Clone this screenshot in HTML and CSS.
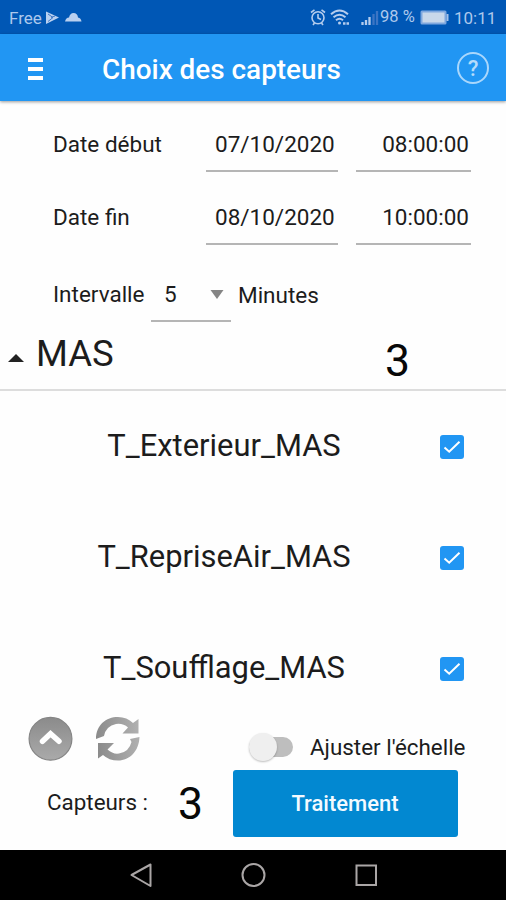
FILE: index.html
```html
<!DOCTYPE html>
<html lang="fr">
<head>
<meta charset="utf-8">
<title>Choix des capteurs</title>
<link rel="stylesheet" href="styles.css">
</head>
<body>
<div class="screen">
  <div class="status">
    <span class="carrier">Free</span>
    <svg class="status-left" width="42" height="34" viewBox="44 0 42 34">
      <path d="M46 11.500L59 17.500L46 24Z" fill="#b9d0f0"/>
      <path d="M48 14l5 3.500-5 4M51 17.500l4-1.500" stroke="#3f78c6" fill="none"/>
      <path d="M65 21.500q1-4 4-4 1-4.500 4.500-4.500 4 0 4.500 4.500 3 .5 3.500 4z" fill="#b9d0f0"/>
    </svg>
    <svg class="status-mid" width="72" height="34" viewBox="308 0 72 34" fill="none" stroke="#b5cdee" stroke-width="1.600">
      <circle cx="318" cy="17.800" r="6"/><path d="M318 14v4l3 1.500M311 12.500l3.500-2.700M325 12.500l-3.500-2.700M313 25l1.500-2M323 25l-1.500-2"/>
      <path d="M331 14.200q8.500-7.500 17 0M333.500 17.300q6-5 12 0M336 20.300q3.500-3 7 0" stroke-width="2"/>
      <circle cx="339.500" cy="23" r="1.500" fill="#b5cdee" stroke="none"/><path d="M343 23.500h6" stroke-dasharray="2.500 1" stroke-width="2.500"/>
      <path d="M362.500 25v-3M366 25v-5M369.500 25v-8" stroke-width="2.300"/><path d="M373.500 25V14M377 25V11" stroke="#3c75c4" stroke-width="2.300"/>
    </svg>
    <span class="percent">98 %</span>
    <svg class="battery" width="30" height="34" viewBox="420 0 30 34">
      <rect x="420.500" y="10.500" width="26" height="14" rx="1.500" fill="#7ea7df"/><rect x="422.500" y="12.500" width="22" height="10" fill="#c8d7ea"/><path d="M447.500 14v7" stroke="#a4c1e9" stroke-width="2"/>
    </svg>
    <span class="clock">10:11</span>
  </div>
  <header class="bar">
    <div class="menu"><i></i><i></i><i></i></div>
    <h1>Choix des capteurs</h1>
    <div class="help">?</div>
  </header>
  <main>
    <div class="row start"><label>Date début</label><span class="field date">07/10/2020</span><span class="field time">08:00:00</span></div>
    <div class="row end"><label>Date fin</label><span class="field date">08/10/2020</span><span class="field time">10:00:00</span></div>
    <div class="row interval"><label>Intervalle</label><span class="field select">5<svg width="14" height="9" viewBox="0 0 14 9"><path d="M.5 0h13L7 9z" fill="#858585"/></svg></span><span class="unit">Minutes</span></div>
    <div class="group"><svg width="16" height="8" viewBox="0 0 16 8"><path d="M0 8L8 0l8 8z" fill="#222"/></svg><span class="group-name">MAS</span><span class="group-count">3</span></div>
    <div class="sensors">
      <div class="sensor"><span class="exterior">T_Exterieur_MAS</span><svg class="check" width="24" height="24" viewBox="0 0 24 24"><rect width="24" height="24" rx="3" fill="#2196f3"/><path d="M4.500 12.500l4.700 4.200L19.500 6.800" fill="none" stroke="#fff" stroke-width="2"/></svg></div>
      <div class="sensor"><span class="return">T_RepriseAir_MAS</span><svg class="check" width="24" height="24" viewBox="0 0 24 24"><rect width="24" height="24" rx="3" fill="#2196f3"/><path d="M4.500 12.500l4.700 4.200L19.500 6.800" fill="none" stroke="#fff" stroke-width="2"/></svg></div>
      <div class="sensor"><span class="supply">T_Soufflage_MAS</span><svg class="check" width="24" height="24" viewBox="0 0 24 24"><rect width="24" height="24" rx="3" fill="#2196f3"/><path d="M4.500 12.500l4.700 4.200L19.500 6.800" fill="none" stroke="#fff" stroke-width="2"/></svg></div>
    </div>
    <div class="tools">
      <svg width="46" height="48" viewBox="27 715 46 48">
        <defs><linearGradient id="g" x1="0" y1="0" x2="0" y2="1"><stop offset="0" stop-color="#8b8b8b"/><stop offset="1" stop-color="#aaa"/></linearGradient></defs>
        <circle cx="50.500" cy="738.800" r="21.400" fill="url(#g)" stroke="#858585" stroke-width="1.200"/>
        <path d="M42.500 741.300l8-7.500 8.500 7.500" fill="none" stroke="#fff" stroke-width="5.500" stroke-linecap="round" stroke-linejoin="miter"/>
      </svg>
      <svg class="refresh" width="46" height="48" viewBox="95 715 46 48">
        <defs><linearGradient id="r" x1="0" y1="0" x2="1" y2="0"><stop offset="0" stop-color="#8b8b8b"/><stop offset="1" stop-color="#b0b0b0"/></linearGradient></defs>
        <path d="M96 739C96 725 106 717 118 717Q127 717 133 723L138.500 719V733.500H122.500L128 727.500Q123 723 116 724Q106 726 104 736Z" fill="url(#r)"/>
        <path d="M139.500 737C139 751 130 760.500 118 760.500Q109 760.500 103 755L98 758.500V743H114L107.500 749.500Q113 754.500 119 753.500Q129 752 131.500 742L130 739Z" fill="url(#r)"/>
      </svg>
      <div class="switch"><i></i></div>
      <span class="scale">Ajuster l'échelle</span>
    </div>
    <div class="actions"><span class="total-label">Capteurs :</span><span class="total">3</span><button>Traitement</button></div>
  </main>
  <nav>
    <svg width="506" height="50" viewBox="0 850 506 50" fill="none" stroke="#aaa6a6" stroke-width="2"><path d="M131.500 875L150.500 864.500V886Z" stroke-linejoin="round"/><circle cx="253.500" cy="875" r="11"/><rect x="356.500" y="865.500" width="19.500" height="19.500"/></svg>
  </nav>
</div>
</body>
</html>
```
FILE: styles.css
```css
* { box-sizing: border-box; }
body { margin: 0; font-family: Roboto, sans-serif; color: #1c1c1c; background: #fefefe; }
.screen { width: 506px; height: 900px; display: flex; flex-direction: column; overflow: hidden; }
span, label { white-space: nowrap; flex: none; }
svg { display: block; flex: none; }
.status { height: 34px; flex: none; display: flex; background: #0057b5; color: #adc8ec; font-size: 17px; line-height: 36px; }
.carrier { width: 35px; margin-left: 9px; }
.status-mid { margin-left: 222px; }
.percent { width: 40px; font-size: 16.5px; line-height: 34px; }
.clock { margin-left: 4px; line-height: 37px; }
.bar { height: 67px; flex: none; display: flex; align-items: center; background: #2196f3; color: #fff; box-shadow: 0 1px 3px rgba(0,0,0,.4); }
.menu { width: 15px; height: 22px; margin-left: 28px; margin-top: 2px; display: flex; flex-direction: column; justify-content: space-between; }
.menu i { height: 4px; background: #fff; }
h1 { width: 355px; margin: 4px 0 0 59px; font-size: 27.9px; line-height: 32px; font-weight: 500; white-space: nowrap; }
.help { width: 32px; height: 32px; border: 2px solid #a9d7fc; border-radius: 50%; font-size: 22px; line-height: 29px; font-weight: 500; text-align: center; color: #b5dcfb; }
main { height: 749px; flex: none; padding-top: 15px; }
.row { display: flex; font-size: 22.5px; line-height: 56px; }
.row label { width: 153px; margin-left: 53px; }
.field { height: 56px; border-bottom: 2px solid #b5b5b5; }
.date { width: 132px; padding-left: 9px; }
.time { width: 115px; margin-left: 18px; padding-right: 2px; text-align: right; }
.end { margin-top: 17px; }
.interval { margin-top: 21px; }
.row.interval label { width: 98px; }
.select { width: 80px; padding: 2px 7px 0 13px; display: flex; align-items: center; justify-content: space-between; }
.unit { margin-left: 7px; line-height: 58px; }
.group { height: 67px; display: flex; align-items: flex-start; border-bottom: 2px solid #ddd; padding-left: 8px; }
.group svg { margin-top: 30px; }
.group-name { width: 349px; margin-left: 12px; font-size: 36.5px; line-height: 60px; }
.group-count { font-size: 44.5px; line-height: 74px; }
.group-count, .total { color: #080808; }
.sensors { height: 312px; }
.sensor { height: 111px; display: flex; align-items: center; font-size: 30.9px; }
.sensor span { width: 448px; text-align: center; line-height: 108px; padding-bottom: 2px; }
.check { margin-left: -8px; }
.tools { height: 55px; margin-top: 12px; display: flex; align-items: flex-start; padding-left: 27px; }
.refresh { margin-left: 22px; }
.switch { width: 44px; height: 20px; margin: 22px 0 0 108px; border-radius: 10px; background: #bebebe; }
.switch i { display: block; width: 28px; height: 28px; margin-top: -4px; border-radius: 50%; background: #efefef; box-shadow: 0 1px 2px rgba(0,0,0,.25); }
.scale { margin-left: 17px; font-size: 22.4px; line-height: 65px; }
.actions { height: 67px; display: flex; align-items: center; }
.total-label { width: 131px; margin-left: 47px; font-size: 22.4px; line-height: 62px; padding-bottom: 4px; }
.total { width: 54.5px; line-height: 68px; font-size: 44.5px; }
button { width: 225px; height: 67px; padding: 0; border: 0; border-radius: 3px; background: #0288d1; color: #f3faff; font: 500 22px/67px Roboto, sans-serif; }
nav { height: 50px; flex: none; background: #000; }
```
